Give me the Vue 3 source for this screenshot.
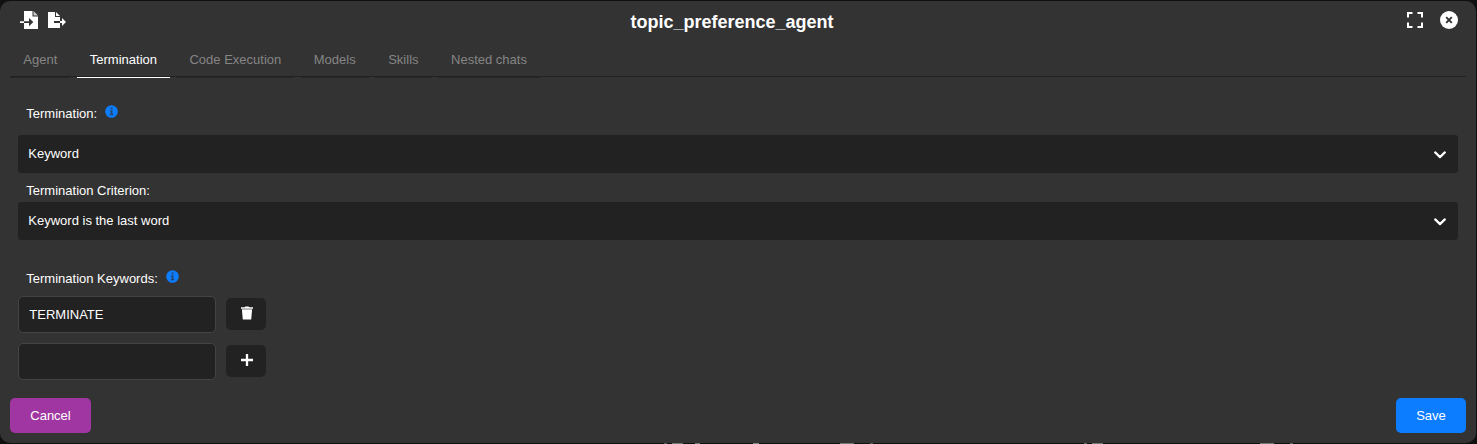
<script setup>
import { ref } from 'vue'

const tabs = ['Agent', 'Termination', 'Code Execution', 'Models', 'Skills', 'Nested chats']
const active = ref('Termination')
const keyword = ref('TERMINATE')
const draft = ref('')
</script>

<template>
  <div class="backdrop">
    <section class="modal">
      <header class="head">
        <div class="tools">
          <svg class="import" viewBox="0 0 18 18" width="18" height="18">
            <path fill="#fff" d="M4 0h8.500v5.500H18V18H4zM0 10.300h4v1.700H0z" />
            <path fill="#ccc" d="M13.500 0L18 4.500h-4.500z" />
            <path fill="#333" d="M4 10.200h5V7l4.300 4.100L9 15.300V12H4z" />
          </svg>
          <svg class="export" viewBox="0 0 18 16" width="18" height="16">
            <path fill="#fff" d="M0 0h7v5h5v4H6v2h6v5H0zM8 0l4 4H8zM12 9h2V6l4 4-4 4v-3h-2z" />
          </svg>
        </div>
        <h1>topic_preference_agent</h1>
        <div class="window-tools">
          <svg viewBox="0 0 16 16" width="16" height="16" fill="none" stroke="#fff" stroke-width="2">
            <path d="M1 5.500V1h4.500M10.500 1H15v4.500M15 10.500V15h-4.500M5.500 15H1v-4.500" />
          </svg>
          <svg viewBox="0 0 18 18" width="18" height="18">
            <circle cx="9" cy="9" r="9" fill="#fff" />
            <path d="M6.200 6.200l5.600 5.600M11.800 6.200l-5.600 5.600" stroke="#333" stroke-width="1.900" />
          </svg>
        </div>
      </header>

      <nav class="tabs">
        <button v-for="t in tabs" :key="t" :class="['tab', { active: t === active }]" @click="active = t">{{ t }}</button>
      </nav>

      <main class="body">
        <div class="label first">
          Termination:
          <svg class="info" viewBox="0 0 13 13" width="13" height="13">
            <circle cx="6.500" cy="6.500" r="6.300" fill="#0d7dff" />
            <path fill="#234873" d="M5.600 2.600h1.900v1.700H5.600zM4.800 5.300h2.700v3.800h.8v1.200H4.700V9.100h.9V6.500h-.8z" />
          </svg>
        </div>
        <div class="select">
          <span>Keyword</span>
          <svg viewBox="0 0 12 8" width="12" height="8"><path d="M1.200 1.400L6 6.100l4.800-4.700" fill="none" stroke="#fff" stroke-width="2.200" stroke-linecap="round" stroke-linejoin="round" /></svg>
        </div>
        <div class="label second">Termination Criterion:</div>
        <div class="select">
          <span>Keyword is the last word</span>
          <svg viewBox="0 0 12 8" width="12" height="8"><path d="M1.200 1.400L6 6.100l4.800-4.700" fill="none" stroke="#fff" stroke-width="2.200" stroke-linecap="round" stroke-linejoin="round" /></svg>
        </div>
        <div class="label third">
          Termination Keywords:
          <svg class="info" viewBox="0 0 13 13" width="13" height="13">
            <circle cx="6.500" cy="6.500" r="6.300" fill="#0d7dff" />
            <path fill="#234873" d="M5.600 2.600h1.900v1.700H5.600zM4.800 5.300h2.700v3.800h.8v1.200H4.700V9.100h.9V6.500h-.8z" />
          </svg>
        </div>
        <div class="row">
          <input v-model="keyword" type="text" />
          <button class="square">
            <svg viewBox="0 0 12 14" width="12" height="14">
              <path fill="#fff" d="M0 1.200h3.700L4.500.4h3l.8.800H12v1.500H0z" />
              <path fill="#bbb" d="M1 2.700h10v.8H1z" />
              <path fill="#fff" d="M.9 3.500h10.200L10.200 13.400H1.800z" />
            </svg>
          </button>
        </div>
        <div class="row">
          <input v-model="draft" type="text" />
          <button class="square">
            <svg viewBox="0 0 12 14" width="12" height="14"><path d="M6 1v12M0 7h12" stroke="#fff" stroke-width="2.300" /></svg>
          </button>
        </div>
      </main>

      <footer class="foot">
        <button class="btn cancel">Cancel</button>
        <button class="btn save">Save</button>
      </footer>
    </section>
  </div>
</template>

<style>
body {
  background: #101010;
  overflow: hidden;
}
</style>

<style scoped>
.backdrop {
  box-sizing: border-box;
  width: 1477px;
  height: 444px;
  padding: 1px 1px 1px 0;
  background-color: #101010;
  /* tops of the page text showing under the dialog's edge */
  background-image:
    linear-gradient(90deg, transparent 664px, #62566c 664px 667px, transparent 667px 672px, #777 672px 683px, transparent 683px 695px, #777 695px 700px, transparent 700px 753px, #888 753px 759px, transparent 759px 840px, #777 840px 854px, transparent 854px 870px, #62566c 870px 873px, transparent 873px 1084px, #666b62 1084px 1087px, transparent 1087px 1092px, #777 1092px 1103px, transparent 1103px 1260px, #777 1260px 1274px, transparent 1274px 1290px, #62665a 1290px 1293px, transparent 1293px);
  background-size: 100% 1px;
  background-position: 0 100%;
  background-repeat: no-repeat;
  font-family: "Liberation Sans", Arial, sans-serif;
  font-size: 13px;
  color: #fff;
}
.modal {
  box-sizing: border-box;
  height: 442px;
  padding: 9px 10px 10px;
  border-radius: 10px;
  background: #333;
  display: flex;
  flex-direction: column;
}
button, input {
  font: inherit;
  color: inherit;
  box-sizing: border-box;
  margin: 0;
  outline: none;
}
svg {
  display: block;
  flex: none;
}
.head {
  display: grid;
  grid-template-columns: 88px 1fr 100px;
  align-items: start;
  height: 33px;
  padding: 0 8px 0 10px;
}
.tools {
  display: flex;
  gap: 10px;
  padding-top: 1px;
}
.export {
  margin-top: 1px;
}
h1 {
  margin: 0;
  padding: 1px 2px 0 0;
  text-align: center;
  font-size: 18px;
  line-height: 22px;
}
.window-tools {
  display: flex;
  justify-content: flex-end;
  align-items: center;
  gap: 17px;
  padding-top: 1px;
}
.tabs {
  display: flex;
  gap: 6.5px;
  height: 34px;
  padding-left: 0.3px;
  box-sizing: border-box;
  border-bottom: 1px solid #222;
}
.tab {
  height: 35px;
  padding: 0 13px 2px;
  border: 0;
  border-bottom: 1px solid #262626;
  background: none;
  color: #858585;
  white-space: nowrap;
}
.tab.active {
  color: #fff;
  border-bottom-color: #fff;
}
.body {
  padding: 0 8px;
}
.label {
  display: flex;
  gap: 8px;
  padding-left: 8.3px;
  line-height: 15px;
}
.info {
  margin-top: -1px;
}
.first {
  margin-top: 29px;
  margin-bottom: 14px;
}
.second {
  margin: 10px 0 4px;
}
.third {
  margin: 31px 0 10px;
}
.select {
  display: flex;
  align-items: center;
  justify-content: space-between;
  box-sizing: border-box;
  height: 38px;
  padding: 0 12px 0 10.3px;
  border-radius: 3px;
  background: #222;
}
.select span {
  padding-bottom: 2px;
}
.select svg {
  margin-top: 1px;
}
.row {
  display: flex;
  align-items: center;
  gap: 10px;
  height: 37px;
  margin-bottom: 10px;
}
.row input {
  width: 198px;
  height: 37px;
  padding: 0 10.3px;
  border: 1px solid #444;
  border-radius: 5px;
  background: #222;
}
.square {
  width: 40px;
  height: 32px;
  margin-bottom: 1px;
  padding: 0 0 3px 1px;
  border: 0;
  border-radius: 5px;
  background: #222;
  display: flex;
  align-items: center;
  justify-content: center;
}
.foot {
  display: flex;
  justify-content: space-between;
  margin-top: auto;
}
.btn {
  height: 35px;
  border: 0;
  border-radius: 5px;
}
.cancel {
  width: 81px;
  background: #9f36a1;
}
.save {
  width: 70px;
  background: #0d7dff;
}
</style>
